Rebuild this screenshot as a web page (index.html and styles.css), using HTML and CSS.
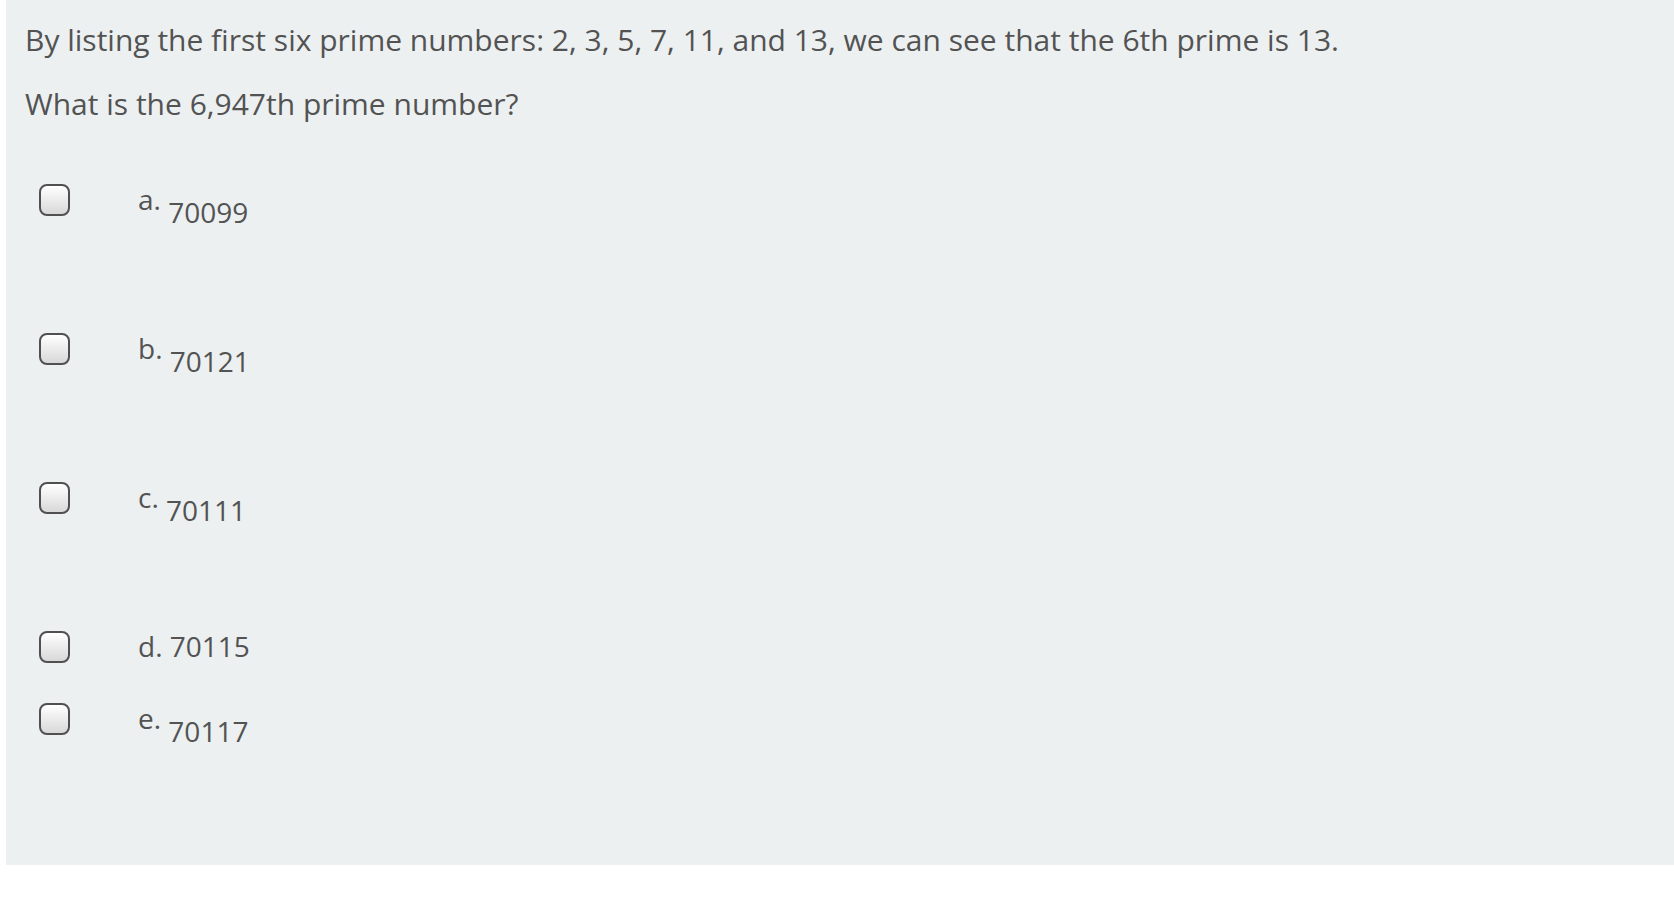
FILE: index.html
```html
<!DOCTYPE html>
<html lang="en">
<head>
<meta charset="utf-8">
<title>Question</title>
<link rel="stylesheet" href="styles.css">
</head>
<body>
<div class="que">
  <p class="qtext">By listing the first six prime numbers: 2, 3, 5, 7, 11, and 13, we can see that the 6th prime is 13.</p>
  <p class="qtext">What is the 6,947th prime number?</p>
  <div class="answers">
    <div class="opt tall">
      <span class="box"></span>
      <span class="lbl">a. <span class="ans low">70099</span></span>
    </div>
    <div class="opt tall">
      <span class="box"></span>
      <span class="lbl">b. <span class="ans low">70121</span></span>
    </div>
    <div class="opt tall">
      <span class="box"></span>
      <span class="lbl">c. <span class="ans low">70111</span></span>
    </div>
    <div class="opt short">
      <span class="box"></span>
      <span class="lbl">d. <span class="ans">70115</span></span>
    </div>
    <div class="opt">
      <span class="box"></span>
      <span class="lbl">e. <span class="ans low">70117</span></span>
    </div>
  </div>
</div>
</body>
</html>
```
FILE: styles.css
```css
html, body {
  margin: 0;
  padding: 0;
  background: #ffffff;
}

body {
  font-family: "Open Sans", "Liberation Sans", sans-serif;
  color: #535353;
}

.que {
  margin-left: 6px;
  height: 865px;
  box-sizing: border-box;
  padding: 19px 15px 0 15px;
  background: #ecf0f1;
}

.qtext {
  margin: 0 0 22px 0;
  padding-left: 4px;
  font-size: 30px;
  line-height: 42px;
}

.answers {
  margin-top: 59px;
}

.opt {
  display: flex;
  align-items: flex-start;
}

.opt.tall {
  height: 149px;
}

.opt.short {
  height: 72px;
}

.box {
  flex: none;
  width: 27px;
  height: 28px;
  margin-left: 18px;
  border: 2px solid #505050;
  border-radius: 8px;
  background: linear-gradient(#ffffff, #d8d8d8);
}

.lbl {
  margin-left: 68px;
  font-size: 28px;
  line-height: 31px;
  white-space: nowrap;
}

.ans.low {
  vertical-align: -13px;
}
```
